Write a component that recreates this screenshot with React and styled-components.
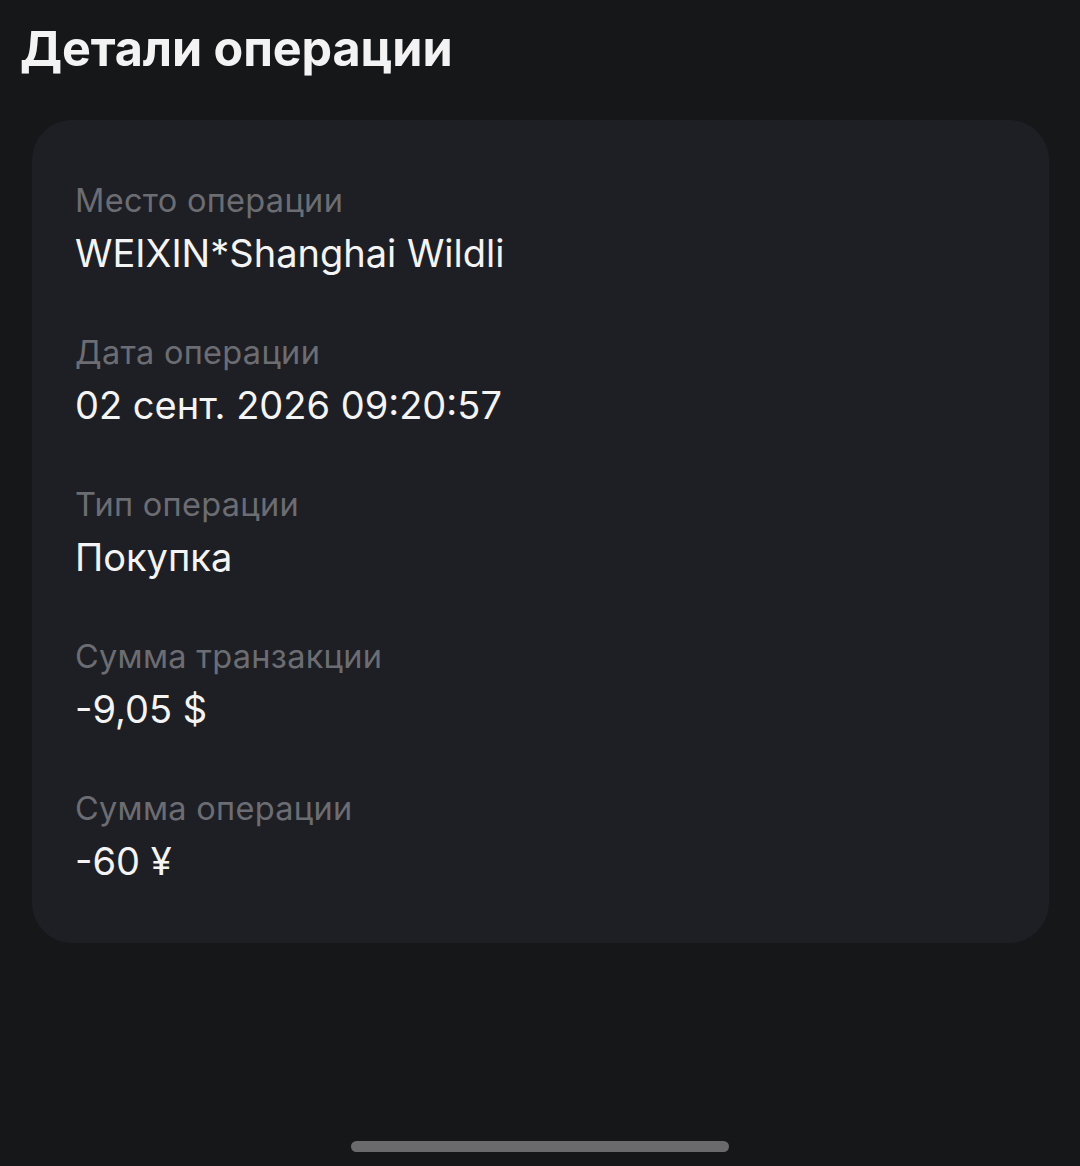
import React from "react";
import styled, { createGlobalStyle } from "styled-components";

const GlobalStyle = createGlobalStyle`
  html, body {
    margin: 0;
    padding: 0;
    background: #161719;
  }
  body {
    font-family: Inter, "Noto Sans", "Liberation Sans", sans-serif;
    -webkit-font-smoothing: antialiased;
  }
`;

const fields = [
  { label: "Место операции", value: "WEIXIN*Shanghai Wildli" },
  { label: "Дата операции", value: "02 сент. 2026 09:20:57" },
  { label: "Тип операции", value: "Покупка" },
  { label: "Сумма транзакции", value: "-9,05 $" },
  { label: "Сумма операции", value: "-60 ¥" },
];

const App = () => {
  return (
    <>
      <GlobalStyle />
      <Page>
        <Title>Детали операции</Title>
        <Card>
          {fields.map((f) => (
            <Field key={f.label}>
              <Label>{f.label}</Label>
              <Value>{f.value}</Value>
            </Field>
          ))}
        </Card>
        <HomeBar />
      </Page>
    </>
  );
};

const Page = styled.div`
  display: flex;
  flex-direction: column;
  min-height: 100vh;
  box-sizing: border-box;
  padding: 19px 31px 14px 32px;
`;

const Title = styled.h1`
  margin: 0 0 41px -12px;
  font-size: 48.5px;
  line-height: 60px;
  font-weight: 700;
  color: #f3f3f3;
  letter-spacing: -0.1px;
`;

const Card = styled.div`
  display: flex;
  flex-direction: column;
  gap: 54px;
  background: #1e1f24;
  border-radius: 40px;
  padding: 61px 43px 56px;
  height: 823px;
  box-sizing: border-box;
`;

const Field = styled.div`
  display: flex;
  flex-direction: column;
  gap: 6px;
`;

const Label = styled.div`
  font-size: 32.5px;
  line-height: 40px;
  color: #6c6d72;
  letter-spacing: 0.3px;
`;

const Value = styled.div`
  font-size: 38px;
  line-height: 52px;
  color: #f4f4f5;
  letter-spacing: 0;
`;

const HomeBar = styled.div`
  margin: auto auto 0;
  width: 378px;
  height: 11px;
  border-radius: 6px;
  background: #6a6a6c;
  position: relative;
  left: -1px;
`;

export default App;
